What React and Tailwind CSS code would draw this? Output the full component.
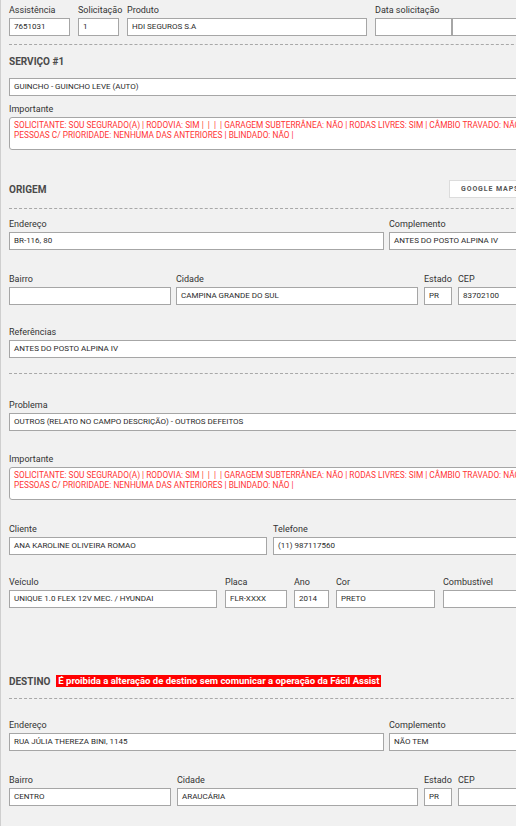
import React from "react";

const inputCls =
  "h-[18px] border border-[#a6a6a6] bg-white pl-[4px] flex items-center text-[8px] text-[#2a2a2a] whitespace-nowrap overflow-hidden";
const labelCls = "h-[12px] leading-[12px] text-[9px] text-[#333] whitespace-nowrap mb-[2px]";

function Field({ label, value, className = "" }) {
  return (
    <div className={className}>
      <div className={labelCls}>{label}</div>
      <div className={inputCls}>{value}</div>
    </div>
  );
}

function Dashed({ className = "" }) {
  return <div className={"border-t border-dashed border-[#a8a8a8] " + className} />;
}

function Important({ className = "" }) {
  return (
    <div className={className}>
      <div className={labelCls}>Importante</div>
      <div className="h-[33px] border border-[#a6a6a6] rounded-[3px] bg-white pl-[4px] pt-[2px] text-[8.3px] leading-[10px] text-[#ff3434] whitespace-pre overflow-hidden">
        <div>SOLICITANTE: SOU SEGURADO(A) | RODOVIA: SIM |  |  |  | GARAGEM SUBTERRÂNEA: NÃO | RODAS LIVRES: SIM | CÂMBIO TRAVADO: NÃO |</div>
        <div>PESSOAS C/ PRIORIDADE: NENHUMA DAS ANTERIORES | BLINDADO: NÃO |</div>
      </div>
    </div>
  );
}

export default function App() {
  return (
    <div className="w-[516px] h-[826px] overflow-hidden bg-[#f1f1f1] border-l border-[#cfcfcf] font-['Roboto',sans-serif]">
      <div className="w-[530px] ml-[8px]">
        {/* Row 1 */}
        <div className="pt-[4px] flex">
          <Field className="w-[61px]" label="Assistência" value="7651031" />
          <Field className="w-[41px] ml-[8px]" label="Solicitação" value="1" />
          <Field className="w-[240px] ml-[8px]" label="Produto" value="HDI SEGUROS S.A" />
          <div className="ml-[8px] flex-1">
            <div className={labelCls}>Data solicitação</div>
            <div className="flex">
              <div className={inputCls + " w-[77px]"}></div>
              <div className={inputCls + " flex-1"}></div>
            </div>
          </div>
        </div>

        <Dashed className="mt-[8px]" />

        <div className="mt-[11px] h-[12px] leading-[12px] text-[10px] font-bold text-[#4a4a4a]">SERVIÇO #1</div>
        <div className={inputCls + " mt-[10px]"}>GUINCHO - GUINCHO LEVE (AUTO)</div>

        <Important className="mt-[7px]" />

        <div className="mt-[30px] h-[18px] flex items-center justify-between">
          <div className="text-[10px] font-bold text-[#4a4a4a]">ORIGEM</div>
          <div className="h-[18px] w-[90px] bg-white border border-[#dcdcdc] flex items-center pl-[11px] text-[7px] font-bold tracking-[0.9px] text-[#555] whitespace-nowrap">
            GOOGLE MAPS
          </div>
        </div>

        <Dashed className="mt-[10px]" />

        <div className="mt-[9px] flex">
          <Field className="w-[375px]" label="Endereço" value="BR-116, 80" />
          <Field className="flex-1 ml-[5px]" label="Complemento" value="ANTES DO POSTO ALPINA IV" />
        </div>

        <div className="mt-[23px] flex">
          <Field className="w-[162px]" label="Bairro" value="" />
          <Field className="w-[242px] ml-[5px]" label="Cidade" value="CAMPINA GRANDE DO SUL" />
          <Field className="w-[28px] ml-[6px]" label="Estado" value="PR" />
          <Field className="flex-1 ml-[6px]" label="CEP" value="83702100" />
        </div>

        <Field className="mt-[21px]" label="Referências" value="ANTES DO POSTO ALPINA IV" />

        <Dashed className="mt-[15px]" />

        <Field className="mt-[25px]" label="Problema" value="OUTROS (RELATO NO CAMPO DESCRIÇÃO) - OUTROS DEFEITOS" />

        <Important className="mt-[22px]" />

        <div className="mt-[23px] flex">
          <Field className="w-[258px]" label="Cliente" value="ANA KAROLINE OLIVEIRA ROMAO" />
          <Field className="flex-1 ml-[6px]" label="Telefone" value="(11) 987117560" />
        </div>

        <div className="mt-[21px] flex">
          <Field className="w-[208px]" label="Veículo" value="UNIQUE 1.0 FLEX 12V MEC. / HYUNDAI" />
          <Field className="w-[62px] ml-[8px]" label="Placa" value="FLR-XXXX" />
          <Field className="w-[35px] ml-[7px]" label="Ano" value="2014" />
          <Field className="w-[99px] ml-[7px]" label="Cor" value="PRETO" />
          <Field className="flex-1 ml-[8px]" label="Combustível" value="" />
        </div>

        <div className="mt-[67px] h-[12px] flex items-center">
          <div className="text-[10px] font-bold text-[#4a4a4a]">DESTINO</div>
          <div className="ml-[6px] h-[12px] leading-[12px] bg-[#ff0000] text-white text-[9.5px] font-bold px-[2px] whitespace-nowrap">
            É proibida a alteração de destino sem comunicar a operação da Fácil Assist
          </div>
        </div>

        <Dashed className="mt-[11px]" />

        <div className="mt-[20px] flex">
          <Field className="w-[375px]" label="Endereço" value="RUA JÚLIA THEREZA BINI, 1145" />
          <Field className="flex-1 ml-[5px]" label="Complemento" value="NÃO TEM" />
        </div>

        <div className="mt-[23px] flex">
          <Field className="w-[162px]" label="Bairro" value="CENTRO" />
          <Field className="w-[241px] ml-[6px]" label="Cidade" value="ARAUCÁRIA" />
          <Field className="w-[28px] ml-[6px]" label="Estado" value="PR" />
          <Field className="flex-1 ml-[6px]" label="CEP" value="" />
        </div>
      </div>
    </div>
  );
}
